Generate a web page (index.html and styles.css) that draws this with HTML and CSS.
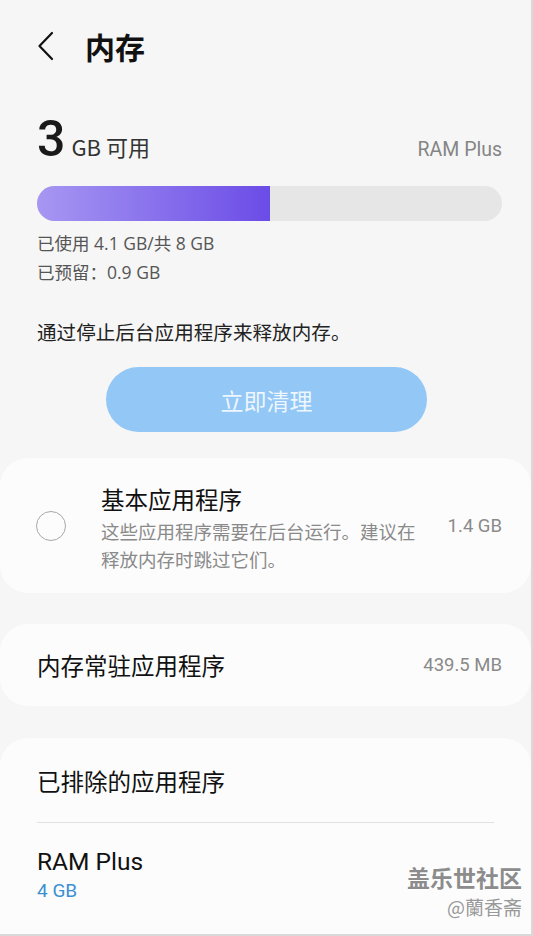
FILE: index.html
```html
<!DOCTYPE html>
<html lang="zh-CN">
<head>
    <meta charset="UTF-8">
    <meta name="viewport" content="width=device-width, initial-scale=1.0">
    <title>内存</title>
    <link rel="stylesheet" href="styles.css">
</head>
<body>
<div class="screen">

    <header class="top-bar">
        <svg class="back" width="18" height="30" viewBox="0 0 18 30">
            <path d="M15 2 L2.5 15 L15 28" fill="none" stroke="#111" stroke-width="2.2" stroke-linecap="round" stroke-linejoin="round"/>
        </svg>
        <h1>内存</h1>
    </header>

    <section class="summary">
        <div class="avail-row">
            <div class="avail">
                <span class="big">3</span>
                <span class="unit">GB 可用</span>
            </div>
            <span class="ram-plus">RAM Plus</span>
        </div>

        <div class="bar">
            <div class="bar-fill" style="width: 50%"></div>
        </div>

        <p class="stat">已使用 4.1 GB/共 8 GB</p>
        <p class="stat">已预留：0.9 GB</p>

        <p class="hint">通过停止后台应用程序来释放内存。</p>

        <div class="btn-wrap">
            <button class="clean-btn">立即清理</button>
        </div>
    </section>

    <div class="card card-basic">
        <span class="radio"></span>
        <div class="basic-text">
            <div class="item-title">基本应用程序</div>
            <div class="item-desc">这些应用程序需要在后台运行。建议在释放内存时跳过它们。</div>
        </div>
        <span class="item-value">1.4 GB</span>
    </div>

    <div class="card card-row">
        <span class="item-title">内存常驻应用程序</span>
        <span class="item-value">439.5 MB</span>
    </div>

    <div class="card card-list">
        <div class="list-item">
            <span class="item-title">已排除的应用程序</span>
        </div>
        <div class="divider"></div>
        <div class="list-item ram-item">
            <span class="item-title">RAM Plus</span>
            <span class="item-sub">4 GB</span>
        </div>
    </div>

    <div class="watermark">
        <div class="wm-main">盖乐世社区</div>
        <div class="wm-user">@蘭香斋</div>
    </div>

</div>
</body>
</html>
```

FILE: styles.css
```css
body {
    margin: 0;
    padding: 0;
    background-color: #f6f6f6;
    font-family: "Noto Sans CJK SC", "Noto Sans", Roboto, sans-serif;
    color: #111;
}

.screen {
    position: relative;
    width: 531px;
    height: 934px;
    overflow: hidden;
    border-right: 2px solid #d9d9d9;
    border-bottom: 2px solid #d9d9d9;
}

.top-bar {
    display: flex;
    align-items: center;
    height: 92px;
    padding-left: 37px;
}

.top-bar h1 {
    margin: 0 0 0 30px;
    font-size: 30px;
    font-weight: bold;
    line-height: 1;
}

.summary {
    padding: 22px 29px 0 37px;
}

.avail-row {
    display: flex;
    justify-content: space-between;
    align-items: baseline;
    height: 50px;
}

.avail {
    display: flex;
    align-items: baseline;
    gap: 6px;
}

.big {
    font-family: Roboto, "Noto Sans", sans-serif;
    font-size: 50px;
    font-weight: 500;
    line-height: 50px;
    color: #1a1a1a;
}

.unit {
    font-size: 22px;
    color: #333;
}

.ram-plus {
    font-family: Roboto, "Noto Sans CJK SC", sans-serif;
    font-size: 19.5px;
    color: #858585;
}

.bar {
    margin-top: 22px;
    height: 35px;
    border-radius: 18px;
    background-color: #e6e6e6;
    overflow: hidden;
}

.bar-fill {
    height: 100%;
    background: linear-gradient(to right, #a797f2, #6b4ce7);
}

.stat {
    margin: 0;
    font-family: "Open Sans", "Noto Sans CJK SC", sans-serif;
    font-size: 17.5px;
    line-height: 29px;
    color: #555;
}

.stat:first-of-type {
    margin-top: 8px;
}

.hint {
    margin: 33px 0 0 0;
    font-size: 19.6px;
    line-height: 24px;
    color: #222;
}

.btn-wrap {
    display: flex;
    justify-content: center;
    margin-top: 23px;
    padding-right: 6px;
}

.clean-btn {
    width: 321px;
    height: 65px;
    border: none;
    border-radius: 33px;
    background-color: #92c7f6;
    color: #eef6fe;
    font-family: inherit;
    font-size: 23px;
}

.card {
    background-color: #fcfcfc;
    border-radius: 28px;
    box-sizing: border-box;
}

.card-basic {
    display: flex;
    align-items: center;
    margin-top: 26px;
    height: 135px;
    padding: 6px 29px 0 36px;
}

.radio {
    flex: none;
    width: 28px;
    height: 28px;
    border: 1.5px solid #a8a8a8;
    border-radius: 50%;
    margin-right: 35px;
    margin-top: -6px;
}

.basic-text {
    flex: 1;
    padding-right: 20px;
}

.item-title {
    font-size: 23.5px;
    line-height: 30px;
    color: #111;
}

.item-desc {
    margin-top: 3px;
    font-size: 18.5px;
    line-height: 28px;
    color: #8a8a8a;
}

.item-value {
    font-family: Roboto, "Noto Sans", sans-serif;
    font-size: 18.5px;
    color: #8a8a8a;
    flex: none;
}

.card-basic .item-value {
    margin-top: -6px;
}

.card-row {
    display: flex;
    justify-content: space-between;
    align-items: center;
    margin-top: 31px;
    height: 82px;
    padding: 0 29px 0 37px;
}

.card-list {
    margin-top: 32px;
    padding: 0 37px 0 37px;
    height: 240px;
}

.list-item {
    display: flex;
    flex-direction: column;
    justify-content: center;
    height: 84px;
    padding-top: 2px;
    box-sizing: border-box;
}

.divider {
    height: 1px;
    background-color: #e2e2e2;
}

.ram-item {
    justify-content: flex-start;
    height: auto;
    padding-top: 24px;
}

.ram-item .item-title {
    font-family: Roboto, "Noto Sans", sans-serif;
    font-size: 24.5px;
}

.item-sub {
    font-family: Roboto, "Noto Sans", sans-serif;
    font-size: 19px;
    line-height: 28px;
    color: #3b8fd3;
}

/* site watermark over the bottom corner */
.watermark {
    position: absolute;
    right: 9px;
    bottom: 16px;
    text-align: right;
}

.wm-main {
    font-size: 23px;
    font-weight: bold;
    line-height: 26px;
    color: #8c8c8c;
    text-shadow: 1px 1px 0 #fff;
}

.wm-user {
    margin-top: 6px;
    font-size: 19px;
    line-height: 22px;
    color: #999;
    text-shadow: 1px 1px 0 #fff;
}
```
